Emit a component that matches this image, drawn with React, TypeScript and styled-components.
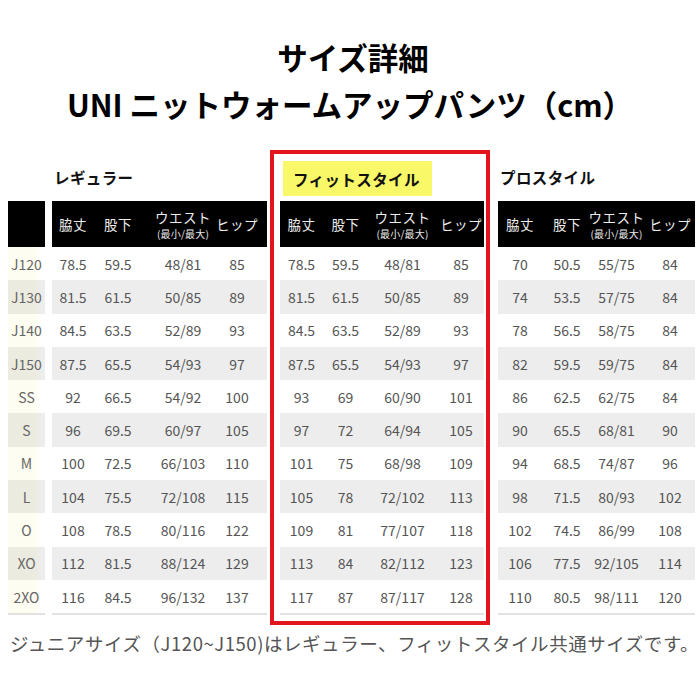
import React from 'react';
import styled, { createGlobalStyle } from 'styled-components';

const GlobalStyle = createGlobalStyle`
  html, body { margin: 0; padding: 0; background: #fff; }
  body { font-family: "Noto Sans CJK JP", "Noto Sans", sans-serif; }
`;

const Page = styled.div`
  width: 700px;
  height: 700px;
  overflow: hidden;
  background: #fff;
  display: flex;
  flex-direction: column;
`;

const TitleBlock = styled.div`
  padding-top: 34px;
  text-align: center;
`;

const TitleLine = styled.div<{ $shift?: number }>`
  font-size: 30.5px;
  font-weight: 700;
  line-height: 47px;
  color: #000;
  padding-left: ${p => p.$shift ?? 0}px;
`;

const Tables = styled.div`
  display: flex;
  align-items: flex-start;
  margin-top: 22px;
  padding-left: 8px;
`;

const SizeColumn = styled.div`
  width: 37px;
  margin-right: 7px;
  padding-top: 51px;
`;

const Table = styled.div<{ $w: number; $mr: number }>`
  width: ${p => p.$w}px;
  margin-right: ${p => p.$mr}px;
  display: flex;
  flex-direction: column;
`;

const FitBox = styled.div`
  box-sizing: border-box;
  width: 220px;
  margin-right: 8px;
  border: 4px solid #e3151c;
  padding: 7px 2px 6px 6px;
  display: flex;
  flex-direction: column;
`;

const LabelArea = styled.div`
  height: 51px;
  display: flex;
  align-items: center;
  padding-left: 2px;
  padding-top: 2px;
  box-sizing: border-box;
`;

const Label = styled.div`
  font-size: 15.5px;
  font-weight: 700;
  color: #111;
  letter-spacing: 0.4px;
`;

const HighlightLabel = styled.div`
  align-self: flex-start;
  margin-left: 3px;
  margin-bottom: 5px;
  height: 35px;
  width: 149px;
  box-sizing: border-box;
  background: #f9f868;
  display: flex;
  align-items: center;
  padding-left: 10px;
  font-size: 15.5px;
  font-weight: 700;
  color: #111;
  letter-spacing: 0.4px;
`;

const HeaderRow = styled.div<{ $cols: string }>`
  height: 46px;
  background: #000;
  display: grid;
  grid-template-columns: ${p => p.$cols};
  align-items: center;
  color: #ececec;
`;

const HeaderBlank = styled.div`
  height: 46px;
  background: #000;
`;

const HeadCell = styled.div`
  display: flex;
  flex-direction: column;
  align-items: center;
  justify-content: center;
  font-size: 13.5px;
  line-height: 19px;
  white-space: nowrap;
  letter-spacing: 0.5px;
`;

const HeadSub = styled.span`
  display: block;
  font-size: 10px;
  line-height: 14px;
  letter-spacing: 0.2px;
`;

const Body = styled.div<{ $tint?: boolean }>`
  border-bottom: 2px solid #e2e2e2;
  background: ${p => (p.$tint ? 'linear-gradient(to right, #fefdf1 0, #fefdf1 26px, #ffffff 34px)' : '#fff')};
`;

const Row = styled.div<{ $cols: string }>`
  height: 33.3px;
  display: grid;
  grid-template-columns: ${p => p.$cols};
  align-items: center;
  &:nth-child(even) { background: #ededed; }
`;

const SizeRow = styled.div`
  height: 33.3px;
  display: flex;
  align-items: center;
  justify-content: center;
  font-size: 14px;
  color: #666;
  &:nth-child(even) { background: rgba(0, 0, 0, 0.07); }
`;

const Cell = styled.div`
  display: flex;
  justify-content: center;
  font-size: 14px;
  color: #555;
  white-space: nowrap;
`;

const Footer = styled.div`
  margin-top: 6px;
  padding-left: 10px;
  font-size: 18.5px;
  line-height: 24px;
  letter-spacing: 0.55px;
  color: #555;
  white-space: nowrap;
`;

const sizes = ['J120', 'J130', 'J140', 'J150', 'SS', 'S', 'M', 'L', 'O', 'XO', '2XO'];

const regular = [
  ['78.5', '59.5', '48/81', '85'],
  ['81.5', '61.5', '50/85', '89'],
  ['84.5', '63.5', '52/89', '93'],
  ['87.5', '65.5', '54/93', '97'],
  ['92', '66.5', '54/92', '100'],
  ['96', '69.5', '60/97', '105'],
  ['100', '72.5', '66/103', '110'],
  ['104', '75.5', '72/108', '115'],
  ['108', '78.5', '80/116', '122'],
  ['112', '81.5', '88/124', '129'],
  ['116', '84.5', '96/132', '137'],
];

const fit = [
  ['78.5', '59.5', '48/81', '85'],
  ['81.5', '61.5', '50/85', '89'],
  ['84.5', '63.5', '52/89', '93'],
  ['87.5', '65.5', '54/93', '97'],
  ['93', '69', '60/90', '101'],
  ['97', '72', '64/94', '105'],
  ['101', '75', '68/98', '109'],
  ['105', '78', '72/102', '113'],
  ['109', '81', '77/107', '118'],
  ['113', '84', '82/112', '123'],
  ['117', '87', '87/117', '128'],
];

const pro = [
  ['70', '50.5', '55/75', '84'],
  ['74', '53.5', '57/75', '84'],
  ['78', '56.5', '58/75', '84'],
  ['82', '59.5', '59/75', '84'],
  ['86', '62.5', '62/75', '84'],
  ['90', '65.5', '68/81', '90'],
  ['94', '68.5', '74/87', '96'],
  ['98', '71.5', '80/93', '102'],
  ['102', '74.5', '86/99', '108'],
  ['106', '77.5', '92/105', '114'],
  ['110', '80.5', '98/111', '120'],
];

const Header: React.FC<{ cols: string }> = ({ cols }) => (
  <HeaderRow $cols={cols}>
    <HeadCell>脇丈</HeadCell>
    <HeadCell>股下</HeadCell>
    <HeadCell>
      <span>ウエスト</span>
      <HeadSub>(最小/最大)</HeadSub>
    </HeadCell>
    <HeadCell>ヒップ</HeadCell>
  </HeaderRow>
);

const Rows: React.FC<{ cols: string; data: string[][] }> = ({ cols, data }) => (
  <Body>
    {data.map((r, i) => (
      <Row key={i} $cols={cols}>
        {r.map((v, j) => (
          <Cell key={j}>{v}</Cell>
        ))}
      </Row>
    ))}
  </Body>
);

const REG_COLS = '42px 48px 82px 26px';
const FIT_COLS = '43px 45px 69px 48px';
const PRO_COLS = '44px 50px 49px 58px';

export default function App() {
  return (
    <Page>
      <GlobalStyle />
      <TitleBlock>
        <TitleLine $shift={6}>サイズ詳細</TitleLine>
        <TitleLine>UNI ニットウォームアップパンツ（cm）</TitleLine>
      </TitleBlock>
      <Tables>
        <SizeColumn>
          <HeaderBlank />
          <Body $tint>
            {sizes.map(s => (
              <SizeRow key={s}>{s}</SizeRow>
            ))}
          </Body>
        </SizeColumn>
        <Table $w={215} $mr={3}>
          <LabelArea>
            <Label>レギュラー</Label>
          </LabelArea>
          <Header cols={REG_COLS} />
          <Rows cols={REG_COLS} data={regular} />
        </Table>
        <FitBox>
          <HighlightLabel>フィットスタイル</HighlightLabel>
          <Header cols={FIT_COLS} />
          <Rows cols={FIT_COLS} data={fit} />
        </FitBox>
        <Table $w={197} $mr={0}>
          <LabelArea>
            <Label>プロスタイル</Label>
          </LabelArea>
          <Header cols={PRO_COLS} />
          <Rows cols={PRO_COLS} data={pro} />
        </Table>
      </Tables>
      <Footer>ジュニアサイズ（J120~J150)はレギュラー、フィットスタイル共通サイズです。</Footer>
    </Page>
  );
}
